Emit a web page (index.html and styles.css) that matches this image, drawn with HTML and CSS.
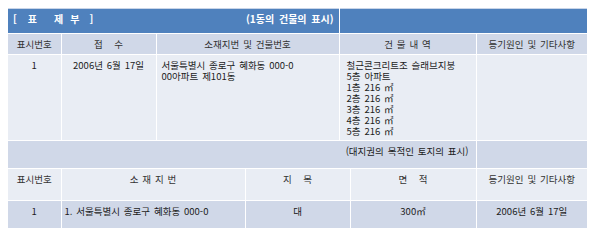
FILE: index.html
```html
<!DOCTYPE html>
<html lang="ko">
<head>
<meta charset="utf-8">
<link rel="stylesheet" href="styles.css">
</head>
<body>
<table class="reg">
  <colgroup>
    <col class="c1"><col class="c2"><col class="c3"><col class="c4"><col class="c5"><col class="c6"><col class="c7">
  </colgroup>
  <tr class="r-title">
    <td colspan="4" class="title-cell"><span class="title-left"><span class="t t1">[</span><span class="t t2">표</span><span class="t t3">제</span><span class="t t4">부</span><span class="t">]</span></span><span class="title-right">(1동의 건물의 표시)</span></td>
    <td colspan="3"></td>
  </tr>
  <tr class="r-head dark">
    <td class="ctr">표시번호</td>
    <td class="ctr">접 &nbsp;&nbsp;수</td>
    <td colspan="2" class="ctr">소재지번 및 건물번호</td>
    <td colspan="2" class="ctr">건 물 내 역</td>
    <td class="ctr">등기원인 및 기타사항</td>
  </tr>
  <tr class="r-data light">
    <td class="ctr">1</td>
    <td class="ctr">2006년 6월 17일</td>
    <td colspan="2" class="left">
      <div class="ln">서울특별시 종로구 혜화동 000-0</div>
      <div class="ln">00아파트 제101동</div>
    </td>
    <td colspan="2" class="left pad7">
      <div class="ln">철근콘크리트조 슬래브지붕</div>
      <div class="ln">5층 아파트</div>
      <div class="ln">1층 216 ㎡</div>
      <div class="ln">2층 216 ㎡</div>
      <div class="ln">3층 216 ㎡</div>
      <div class="ln">4층 216 ㎡</div>
      <div class="ln">5층 216 ㎡</div>
    </td>
    <td></td>
  </tr>
  <tr class="r-sub dark">
    <td colspan="6" class="right">(대지권의 목적인 토지의 표시)</td>
    <td></td>
  </tr>
  <tr class="r-head2 light">
    <td class="ctr">표시번호</td>
    <td colspan="2" class="ctr">소 재 지 번</td>
    <td colspan="2" class="ctr">지 &nbsp;&nbsp;목</td>
    <td class="ctr">면 &nbsp;&nbsp;적</td>
    <td class="ctr">등기원인 및 기타사항</td>
  </tr>
  <tr class="r-data2 dark">
    <td class="ctr">1</td>
    <td colspan="2" class="left pad3">1. 서울특별시 종로구 혜화동 000-0</td>
    <td colspan="2" class="ctr">대</td>
    <td class="ctr">300㎡</td>
    <td class="ctr">2006년 6월 17일</td>
  </tr>
</table>
</body>
</html>
```

FILE: styles.css
```css
html, body {
  margin: 0;
  padding: 0;
  background: #ffffff;
}
body {
  padding: 8px 0 0 8px;
  font-family: "Noto Sans CJK KR", "Noto Sans", sans-serif;
  font-size: 9.5px;
  line-height: 11px;
  word-spacing: 1.2px;
  color: #1c1c1c;
}
.reg {
  width: 579px;
  table-layout: fixed;
  border-collapse: collapse;
  border-top: 1px solid #c9d5e8;
}
.c1 { width: 53px; }
.c2 { width: 95px; }
.c3 { width: 89px; }
.c4 { width: 94px; }
.c5 { width: 11px; }
.c6 { width: 126px; }
.c7 { width: 111px; }
.reg td {
  border: 1px solid #ffffff;
  padding: 5px 5px 0 5px;
  vertical-align: top;
  overflow: hidden;
  white-space: nowrap;
}
.reg tr:first-child td { border-top: 0; }
.reg td:first-child { border-left: 0; }
.reg td:last-child { border-right: 0; }
.ln {
  height: 11px;
}
.r-title td {
  background: #4f81bd;
  color: #ffffff;
  font-weight: bold;
  font-size: 10px;
  height: 25px;
  padding-top: 4px;
  box-sizing: border-box;
}
.title-cell {
  padding-left: 8px;
  padding-right: 7px;
}
.title-left { float: left; }
.t { display: inline-block; }
.t1 { margin-right: 11px; }
.t2 { margin-right: 17px; }
.t3 { margin-right: 7px; }
.t4 { margin-right: 10px; }
.title-right { float: right; word-spacing: 2px; }
.dark td { background: #d0d8e8; }
.light td { background: #e9edf4; }
.r-head td { height: 21px; box-sizing: border-box; color: #333333; }
.r-data td { height: 86px; box-sizing: border-box; }
.r-sub td { height: 28px; box-sizing: border-box; }
.r-head2 td { height: 32px; box-sizing: border-box; color: #333333; }
.r-data2 td { height: 28px; box-sizing: border-box; }
.ctr { text-align: center; }
.left { text-align: left; }
.right { text-align: right; padding-right: 7px !important; }
.pad7 { padding-left: 7px !important; }
.pad3 { padding-left: 3px !important; }
```
